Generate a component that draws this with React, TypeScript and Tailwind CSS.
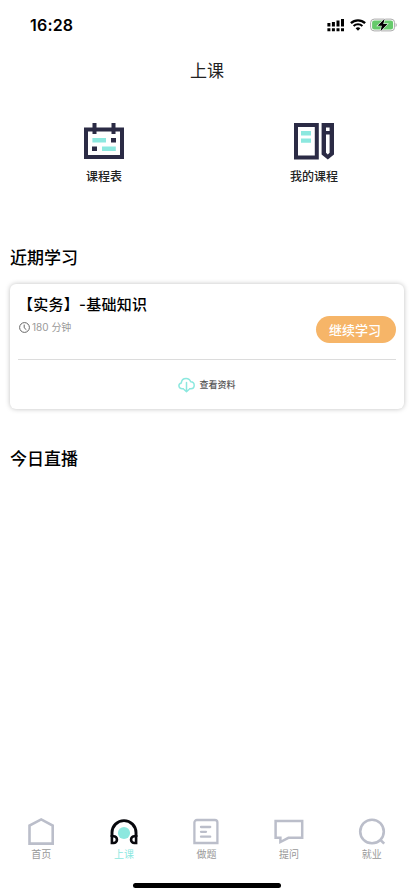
import React from "react";

const ink = "#2b2b45";
const mint = "#8ce8df";
const gray = "#bbbeca";

const StatusBar = () => (
  <header className="h-[50px] flex items-center justify-between pl-[30px] pr-[16px]">
    <span className="text-[16px] leading-[20px] font-semibold text-black tracking-[0.2px]">16:28</span>
    <div className="flex items-center">
      <svg className="w-[18px] h-[14px]" viewBox="0 0 18 14" fill="#000" aria-hidden="true">
        <path d="M0.4 5h3v3.6h-3zM4.9 4h3v4.6h-3zM9.5 2.6h3v6h-3zM14 1h3v7.6h-3z" />
        <path d="M0.4 10.2h3v3h-3zM4.9 10.2h3v3h-3zM9.5 10.2h3v3h-3zM14 10.2h3v3h-3z" />
      </svg>
      <svg className="w-[16px] h-[12px] ml-[5px]" viewBox="0 0 16 12" fill="none" stroke="#000" aria-hidden="true">
        <path d="M0.9 4.2a10.2 10.2 0 0 1 14.2 0" strokeWidth="2.3" />
        <path d="M3.6 7a6.4 6.4 0 0 1 8.8 0" strokeWidth="2.1" />
        <path d="M5.6 9.3a3.5 3.5 0 0 1 4.8 0L8 11.7z" fill="#000" stroke="none" />
      </svg>
      <svg className="w-[28px] h-[14px] ml-[4px]" viewBox="0 0 28 14" aria-hidden="true">
        <rect x="0.6" y="1.1" width="24" height="11.8" rx="3.6" fill="#fff" stroke="#aaa" strokeWidth="1" />
        <rect x="2.1" y="2.6" width="21" height="8.8" rx="2.2" fill="#66ca6b" />
        <path d="M25.6 5v4c1.5-.5 1.5-3.5 0-4z" fill="#aaa" />
        <path d="M14.6 0.8L7.6 7.8h4.2l-1.3 5.4 7-7.1h-4.2z" fill="#000" stroke="#fff" strokeWidth="1.1" paintOrder="stroke" />
      </svg>
    </div>
  </header>
);

const CalendarIcon = () => (
  <svg className="w-[40px] h-[36px]" viewBox="0 0 40 36" aria-hidden="true">
    <path d="M2 6.4h36v27.6H2z" fill="#fff" stroke={ink} strokeWidth="4" />
    <path d="M8.5 0h4v11h-4zM27.5 0h4v11h-4zM27 15h5v4.6h-5zM8 23.4h5V28H8z" fill={ink} />
    <path d="M8.4 15h13.6v4.5H8.4zM18 23.4h13.8v4.5H18z" fill={mint} />
  </svg>
);

const BookIcon = () => (
  <svg className="w-[40px] h-[37px]" viewBox="0 0 40 37" aria-hidden="true">
    <path d="M2 2h20.8v32.4H2z" fill="#fff" stroke={ink} strokeWidth="4" />
    <path d="M7 8h10v4.4H7zM7 15.4h10v4.4H7z" fill={mint} />
    <path d="M27.6 0H40v31.5l-6.2 5-6.2-5z" fill={ink} />
    <path d="M32 4.6h3.6V8H32zM32 11.6h3.6v18.2l-1.8 1.6-1.8-1.6z" fill="#fff" />
  </svg>
);

const ClockIcon = () => (
  <svg className="w-[11px] h-[11px]" viewBox="0 0 11 11" fill="none" stroke="#666" aria-hidden="true">
    <circle cx="5.5" cy="5.5" r="4.9" strokeWidth="1" />
    <path d="M5.2 2.6v3.2l2.2 2" strokeWidth="1" />
  </svg>
);

const CloudIcon = () => (
  <svg
    className="w-[17px] h-[16px]"
    viewBox="0 0 17 16"
    fill="none"
    stroke={mint}
    strokeWidth="1.5"
    strokeLinecap="round"
    strokeLinejoin="round"
    aria-hidden="true"
  >
    <path d="M5.4 11.7H4.2C2.3 11.7 0.9 10.5 0.9 8.8c0-1.6 1-2.6 2.4-2.9C3.5 3 5.5 1.4 8.1 1.4c2.3 0 3.9 1.2 4.6 3.3 2 .1 3.5 1.5 3.5 3.5 0 2-1.4 3.5-3.3 3.5h-1.3" />
    <path d="M8.5 5.6v8.9M6 12.5l2.5 2.1 2.5-2.1" />
  </svg>
);

const HomeIcon = () => (
  <svg className="w-[28px] h-[28px]" viewBox="0 0 28 28" fill="none" stroke={gray} strokeWidth="2.6" aria-hidden="true">
    <path d="M2.5 26.6V8.6L14.2 2.4l11.5 6.2v18z" />
  </svg>
);

const HeadphoneIcon = () => (
  <svg className="w-[28px] h-[28px]" viewBox="0 0 28 28" fill="none" aria-hidden="true">
    <circle cx="14" cy="16" r="6.1" fill={mint} />
    <path d="M2 20v-4.400a12 12 0 0 1 24 0v4.400" stroke="#08080d" strokeWidth="2.900" />
    <path
      d="M1.900 19.300v6.700h1.700a3.300 3.300 0 0 0 0-6.700zM26.100 19.300v6.700h-1.700a3.300 3.300 0 0 1 0-6.700z"
      stroke="#08080d"
      strokeWidth="2.600"
    />
  </svg>
);

const PaperIcon = () => (
  <svg className="w-[28px] h-[28px]" viewBox="0 0 28 28" fill="none" stroke={gray} strokeWidth="2.300" aria-hidden="true">
    <path d="M2.400 26V5.600A2.600 2.600 0 0 1 5 3h17.800a2.600 2.600 0 0 1 2.600 2.600V26z" />
    <path d="M9 10h9.200M9 14.800h5M9 19.700h9.200" strokeLinecap="round" />
  </svg>
);

const ChatIcon = () => (
  <svg className="w-[30px] h-[28px]" viewBox="0 0 30 28" fill="none" stroke={gray} strokeWidth="2.500" aria-hidden="true">
    <path d="M1.600 4h26.600v16.800H14.400l-8 4.200v-4.200H1.600z" />
  </svg>
);

const SearchIcon = () => (
  <svg className="w-[28px] h-[28px]" viewBox="0 0 28 28" fill="none" stroke={gray} strokeWidth="2.600" aria-hidden="true">
    <circle cx="14" cy="14.500" r="11.800" />
    <path d="M22 22.500l4.200 4.200" />
  </svg>
);

const tabs = [
  { label: "首页", icon: <HomeIcon />, active: false },
  { label: "上课", icon: <HeadphoneIcon />, active: true },
  { label: "做题", icon: <PaperIcon />, active: false },
  { label: "提问", icon: <ChatIcon />, active: false },
  { label: "就业", icon: <SearchIcon />, active: false },
];

export default function App() {
  return (
    <div className="h-[896px] w-[414px] flex flex-col bg-white text-black overflow-hidden font-[Inter,'Noto_Sans_CJK_SC',sans-serif]">
      <StatusBar />
      <h1 className="h-[42px] flex items-center justify-center text-[17px] leading-[24px] font-normal text-[#222]">上课</h1>

      {/* Shortcuts */}
      <section className="mt-[31px] flex justify-between pl-[64px] pr-[60px]">
        <button className="w-[80px] flex flex-col items-center">
          <CalendarIcon />
          <span className="mt-[9px] text-[12px] leading-[18px] font-medium text-[#222]">课程表</span>
        </button>
        <button className="w-[80px] flex flex-col items-center">
          <BookIcon />
          <span className="mt-[8px] text-[12px] leading-[18px] font-medium text-[#222]">我的课程</span>
        </button>
      </section>

      <main className="mt-[60px] px-[10px] flex-1">
        <h2 className="text-[17px] leading-[24px] font-medium">近期学习</h2>

        <article className="mt-[14px] h-[125px] rounded-[6px] bg-white px-[8px] pt-[11px] shadow-[0_0_5px_rgba(0,0,0,0.25)]">
          <div className="h-[64px] flex justify-between">
            <div>
              <h3 className="text-[15px] leading-[20px] font-medium tracking-[0.25px]">【实务】-基础知识</h3>
              <div className="mt-[5px] pl-[1px] flex items-center text-[10px] leading-[15px] text-[#999]">
                <ClockIcon />
                <span className="ml-[2px]">180 分钟</span>
              </div>
            </div>
            <button className="mt-[21px] w-[80px] h-[27px] rounded-full bg-[#f6b568] text-white text-[13px] leading-[20px] font-medium flex items-center justify-center pr-[2px]">
              继续学习
            </button>
          </div>
          <div className="h-[50px] border-t border-[#dcdcdc] flex items-center justify-center">
            <CloudIcon />
            <span className="ml-[4px] text-[9px] leading-[14px] font-medium text-[#555]">查看资料</span>
          </div>
        </article>

        <h2 className="mt-[38px] text-[17px] leading-[24px] font-medium">今日直播</h2>
      </main>

      <nav className="h-[66px] grid grid-cols-5 pr-[1px]">
        {tabs.map((tab) => (
          <button key={tab.label} className="flex flex-col items-center">
            {tab.icon}
            <span
              className={`mt-[2px] text-[10px] leading-[14px] ${tab.active ? "text-[#8ce8df]" : "text-[#999]"}`}
            >
              {tab.label}
            </span>
          </button>
        ))}
      </nav>
      <div className="h-[13px] flex justify-center">
        <div className="w-[148px] h-[5px] rounded-full bg-black" />
      </div>
    </div>
  );
}
